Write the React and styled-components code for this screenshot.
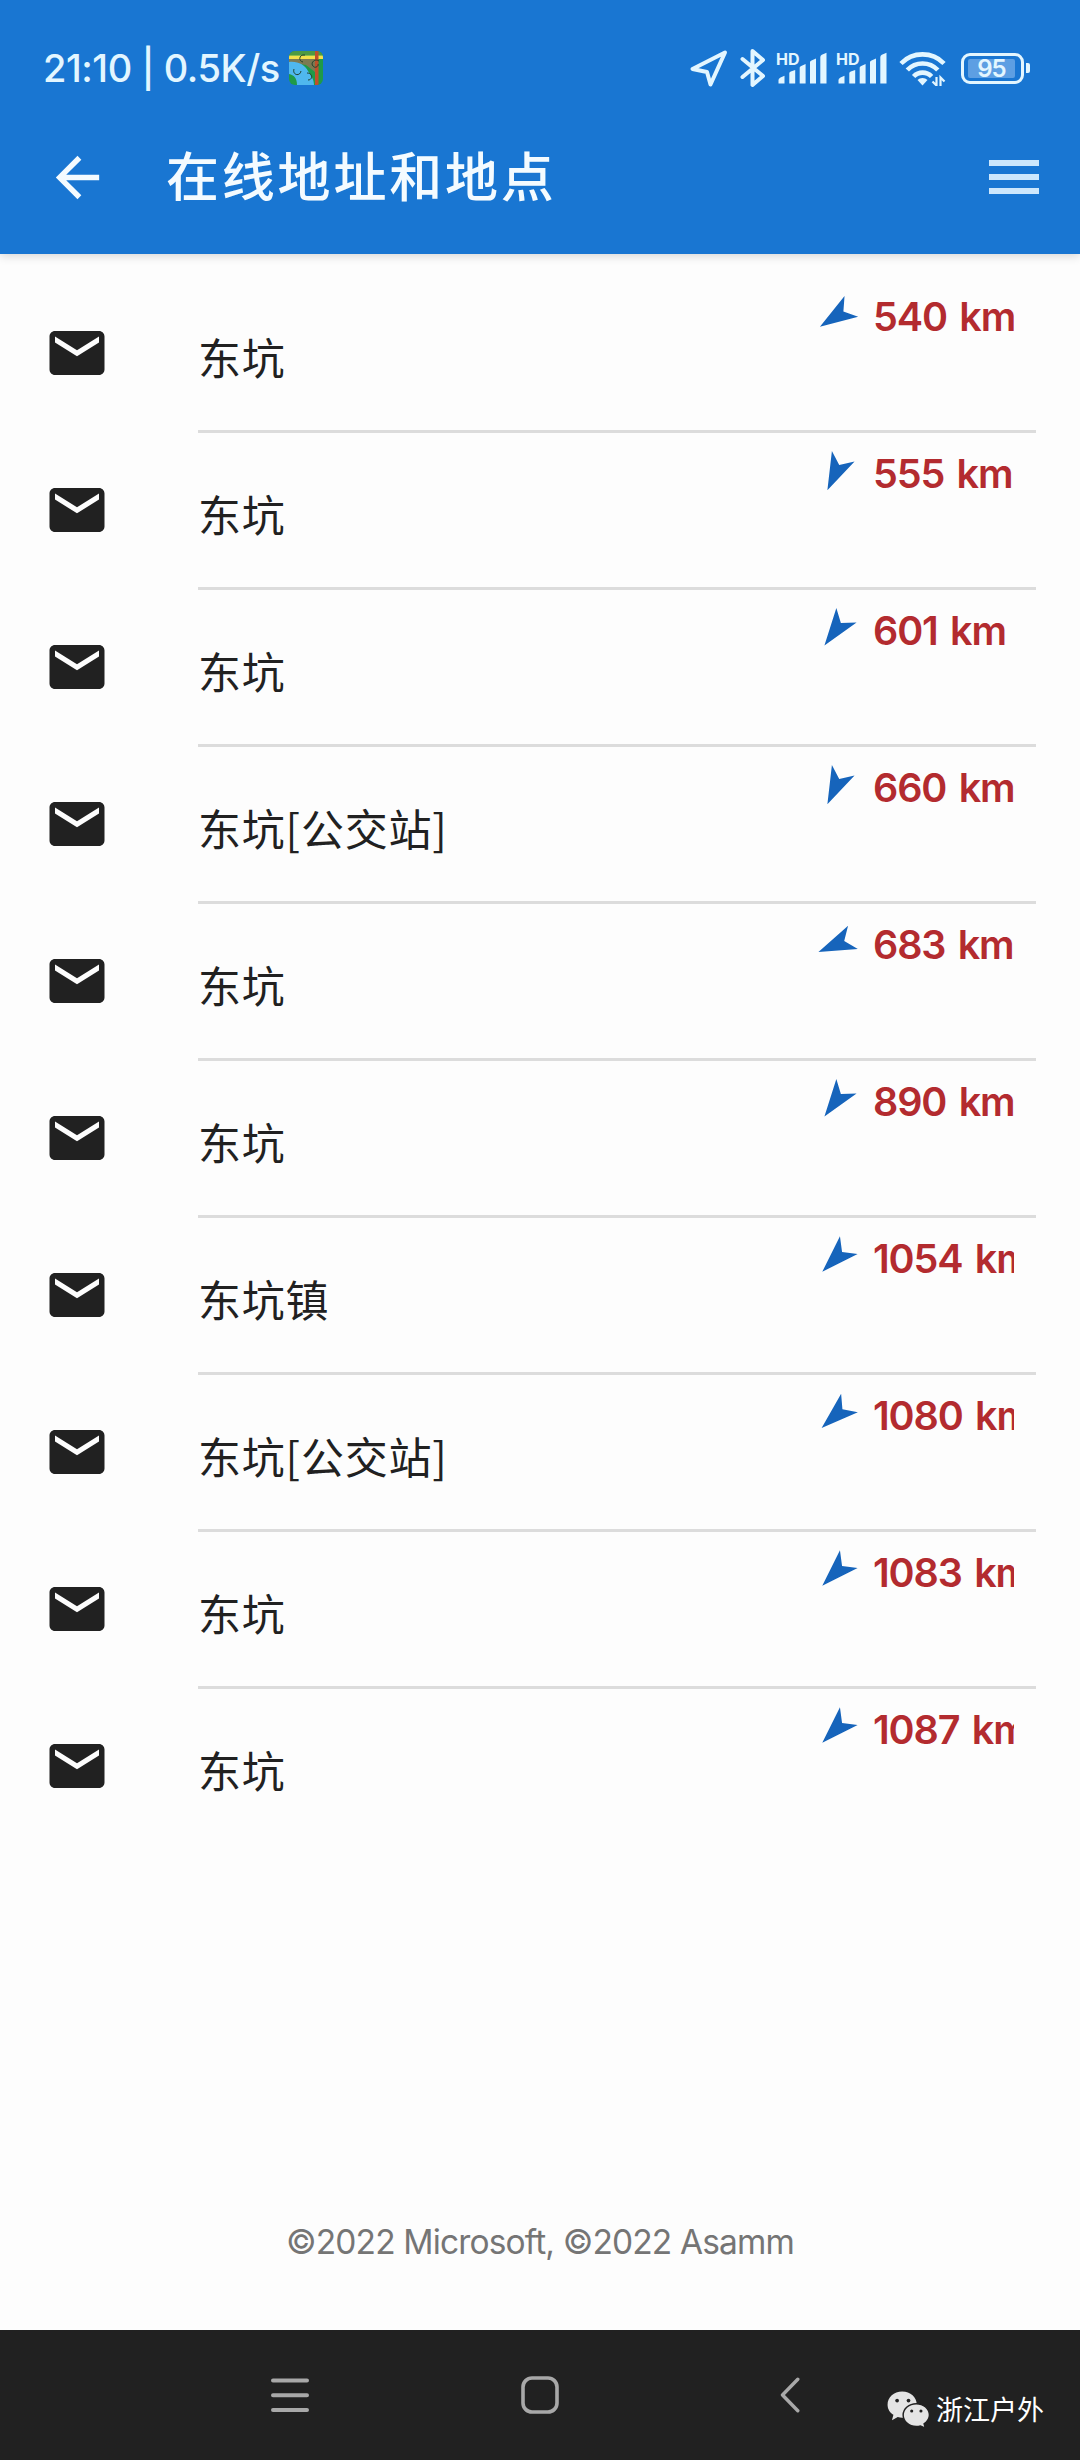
import styled, { createGlobalStyle } from "styled-components";

const GlobalStyle = createGlobalStyle`
  body {
    margin: 0;
    background-color: #fdfdfd;
    font-family: Inter, "Noto Sans CJK SC", sans-serif;
  }
`;

const Screen = styled.div`
  position: relative;
  display: flex;
  flex-direction: column;
  width: 1080px;
  height: 2460px;
  overflow: hidden;
`;

const Header = styled.header`
  height: 254px;
  background-color: #1976d2;
  box-shadow: 0 2px 9px rgba(0, 0, 0, 0.16);
`;

const StatusBar = styled.div`
  display: flex;
  align-items: center;
  height: 64px;
  padding: 36px 50px 0 43px;
  color: #e3f6ff;
`;

const Clock = styled.span`
  width: 246px;
  font-size: 38px;
  font-weight: 500;
  letter-spacing: -0.45px;
  white-space: nowrap;
`;

const StatusIcons = styled.div`
  display: flex;
  align-items: center;
  margin-left: auto;
`;

const StatusIcon = styled.svg`
  display: block;
  margin-left: ${(props) => props.$gap || 0}px;
`;

const Signal = styled.div`
  position: relative;
  width: 50px;
  height: 36px;
  margin-left: ${(props) => props.$gap}px;
`;

const Hd = styled.span`
  position: absolute;
  top: 2px;
  left: -1px;
  font-size: 16px;
  font-weight: 700;
  line-height: 14px;
`;

const Battery = styled.div`
  box-sizing: border-box;
  width: 63px;
  height: 31px;
  margin-left: 14px;
  padding: 3px 4px;
  border: 3px solid #e3f6ff;
  border-radius: 9px;
`;

const Level = styled.div`
  width: 47px;
  height: 19px;
  background-color: #5d9fe3;
  border-radius: 2px;
  font-size: 24px;
  font-weight: 600;
  line-height: 19px;
  letter-spacing: -1px;
  text-align: center;
`;

const BatteryTip = styled.div`
  width: 4px;
  height: 10px;
  margin-left: 2px;
  background-color: #e3f6ff;
  border-radius: 0 2px 2px 0;
`;

const Toolbar = styled.div`
  display: flex;
  align-items: center;
  height: 154px;
  padding: 0 41px 0 45px;
`;

const Title = styled.h1`
  flex: 1;
  margin: -6px 0 0 56px;
  color: #f4fbff;
  font-family: "Noto Sans CJK SC", sans-serif;
  font-size: 53px;
  font-weight: 500;
  letter-spacing: 2.8px;
  line-height: 80px;
`;

const MenuButton = styled.div`
  display: flex;
  flex-direction: column;
  gap: 8px;
  width: 50px;
`;

const MenuLine = styled.span`
  height: 6px;
  background-color: #cde7fc;
`;

const List = styled.main`
  flex: 1;
  padding-top: 22px;
`;

const Row = styled.div`
  display: flex;
  height: 157px;
`;

const MailIcon = styled.svg`
  width: 66px;
  height: 66px;
  margin: 44px 88px 0 44px;
`;

const RowBody = styled.div`
  box-sizing: border-box;
  display: flex;
  width: 838px;
  padding-right: 22px;
  border-bottom: 3px solid ${(props) => (props.$last ? "transparent" : "#dcdcdc")};
`;

const Name = styled.span`
  flex: 1;
  padding-top: 48px;
  color: #212121;
  font-family: "Noto Sans CJK SC", sans-serif;
  font-size: 43px;
  line-height: 64px;
  letter-spacing: 0.8px;
`;

const Distance = styled.div`
  display: flex;
  align-items: center;
  width: 199px;
  height: 40px;
  margin-top: 21px;
`;

const Arrow = styled.svg`
  flex: none;
  width: 40px;
  height: 40px;
  transform: rotate(${(props) => props.$bearing}deg);
`;

const Km = styled.span`
  width: 141px;
  margin-left: 18px;
  overflow: hidden;
  color: #b32b2f;
  font-size: 39.5px;
  font-weight: 600;
  line-height: 48px;
  letter-spacing: -1.1px;
  word-spacing: 3.5px;
  white-space: nowrap;
`;

const Copyright = styled.footer`
  height: 120px;
  color: #757575;
  font-size: 33.5px;
  line-height: 64px;
  letter-spacing: -0.85px;
  text-align: center;
`;

const NavBar = styled.nav`
  display: flex;
  box-sizing: border-box;
  height: 130px;
  padding: 0 165px;
  background-color: #212121;
`;

const NavItem = styled.div`
  display: flex;
  align-items: center;
  justify-content: center;
  width: 250px;
`;

const Watermark = styled.div`
  position: absolute;
  right: 36px;
  bottom: 31px;
  display: flex;
  align-items: center;
  gap: 6px;
  color: #fff;
  font-family: "Noto Sans CJK SC", sans-serif;
  font-size: 27px;
  line-height: 40px;
`;

const places = [
  { name: "东坑", km: "540 km", bearing: 237 },
  { name: "东坑", km: "555 km", bearing: 205 },
  { name: "东坑", km: "601 km", bearing: 216 },
  { name: "东坑[公交站]", km: "660 km", bearing: 205 },
  { name: "东坑", km: "683 km", bearing: 247 },
  { name: "东坑", km: "890 km", bearing: 216 },
  { name: "东坑镇", km: "1054 km", bearing: 225 },
  { name: "东坑[公交站]", km: "1080 km", bearing: 228 },
  { name: "东坑", km: "1083 km", bearing: 225 },
  { name: "东坑", km: "1087 km", bearing: 225 },
];

const MapBadge = () => (
  <StatusIcon width="34" height="34" viewBox="0 0 34 34">
    <clipPath id="badge">
      <rect width="34" height="34" rx="6" />
    </clipPath>
    <g clipPath="url(#badge)">
      <rect width="34" height="34" fill="#1f9a48" />
      <path d="M0 7h26v14l-9-7L0 11z" fill="#7c7a52" />
      <path d="M0 11c9-1 16 3 19 9 3 5 6 8 6 14H8C8 27 5 24 0 23z" fill="#4fb8ee" />
      <rect y="0" width="34" height="4" fill="#4d9a43" />
      <rect y="4.500" width="34" height="3.500" fill="#f3e04a" />
      <rect x="26" width="3.500" height="34" fill="#c0502a" />
      <g fill="none" stroke="#23402e" strokeWidth="1">
        <path d="M16 4c-6-1-7 6-2 7M5 18c-2 6 6 8 7 2M18 22c6 0 6 7 1 7M30 10c-4-3-9 2-6 5 2 3 6 0 5-2" />
      </g>
    </g>
  </StatusIcon>
);

const SignalBars = ({ gap }) => (
  <Signal $gap={gap}>
    <Hd>HD</Hd>
    <svg width="50" height="36" viewBox="0 0 50 36" fill="#e3f6ff">
      <path d="M1.500 33.500v-3.500q0-1.500 2-2.500l4-1.800v7.800z" />
      <path d="M12.300 33.500V23q0-1 1.500-1.500l4.400-1.500v13.500z" />
      <path d="M22.700 33.500V17.500q0-1 1.500-1.500l4.400-2v19.500z" />
      <path d="M33 33.500V12q0-1 1.500-1.500l4.500-2v25z" />
      <path d="M43.300 33.500V7q0-1.500 1.500-2.200l4.700-2v30.700z" />
    </svg>
  </Signal>
);

const WechatLogo = () => (
  <svg width="43" height="37" viewBox="0 0 44 38">
    <path
      d="M15.500 0.500C7 .500.500 6.500.500 14c0 4.500 2.500 8.200 6 10.500L5 30l6-3.200c1.500.400 3 .700 4.500.700C24 27.500 30.500 21.500 30.500 14S24 .500 15.500.500z"
      fill="#e4e4e4"
    />
    <path
      d="M30 13c-7.500 0-13.500 5.200-13.500 11.700S22.500 36.500 30 36.500c1.600 0 3-.200 4.300-.600l5 2.300-1.300-4.500c3.300-2.200 5.500-5.300 5.500-9C43.500 18.200 37.500 13 30 13z"
      fill="#e4e4e4"
      stroke="#212121"
      strokeWidth="1.500"
    />
    <g fill="#212121">
      <circle cx="10.300" cy="9.800" r="1.900" />
      <circle cx="22" cy="9.800" r="1.900" />
      <circle cx="25.300" cy="20.500" r="1.600" />
      <circle cx="34.800" cy="20.500" r="1.600" />
    </g>
  </svg>
);

const App = () => (
  <Screen>
    <GlobalStyle />
    <Header>
      <StatusBar>
        <Clock>21:10 | 0.5K/s</Clock>
        <MapBadge />
        <StatusIcons>
          <StatusIcon width="40" height="40" viewBox="0 0 40 40">
            <path
              d="M3.500 21 36 4.500 21.500 36.500 18 24z"
              fill="none"
              stroke="#e3f6ff"
              strokeWidth="4"
              strokeLinejoin="round"
            />
          </StatusIcon>
          <StatusIcon $gap={11} width="26" height="40" viewBox="0 0 26 40">
            <path
              d="M2.500 11 23 28 12.500 37V3L23 12 2.500 29"
              fill="none"
              stroke="#e3f6ff"
              strokeWidth="4"
              strokeLinejoin="round"
              strokeLinecap="round"
            />
          </StatusIcon>
          <SignalBars gap={11} />
          <SignalBars gap={10} />
          <StatusIcon $gap={12} width="48" height="36" viewBox="0 0 48 36">
            <g fill="none" stroke="#e3f6ff" strokeWidth="4.600">
              <path d="M2 13.500a30 30 0 0 1 43 0" />
              <path d="M8.300 20a21 21 0 0 1 30.500 0" />
              <path d="M14.600 26.500a12.500 12.500 0 0 1 18 0" />
            </g>
            <path d="M18.500 30a7 7 0 0 1 10 0l-5 5.500z" fill="#e3f6ff" />
            <path
              d="M37.500 27v8.500l-4-4M41.500 36v-8.500l4 4"
              fill="none"
              stroke="#e3f6ff"
              strokeWidth="2.200"
            />
          </StatusIcon>
          <Battery>
            <Level>95</Level>
          </Battery>
          <BatteryTip />
        </StatusIcons>
      </StatusBar>
      <Toolbar>
        <svg width="65" height="65" viewBox="0 0 24 24">
          <path
            d="M20 11H7.830l5.590-5.590L12 4l-8 8 8 8 1.410-1.410L7.830 13H20v-2z"
            fill="#f4fbff"
          />
        </svg>
        <Title>在线地址和地点</Title>
        <MenuButton>
          <MenuLine />
          <MenuLine />
          <MenuLine />
        </MenuButton>
      </Toolbar>
    </Header>
    <List>
      {places.map((place, i) => (
        <Row key={i}>
          <MailIcon viewBox="0 0 24 24">
            <path
              d="M20 4H4c-1.100 0-2 .900-2 2v12c0 1.100.900 2 2 2h16c1.100 0 2-.900 2-2V6c0-1.100-.900-2-2-2zm0 4.200-8 5-8-5V6l8 5 8-5z"
              fill="#212121"
            />
          </MailIcon>
          <RowBody $last={i === places.length - 1}>
            <Name>{place.name}</Name>
            <Distance>
              <Arrow $bearing={place.bearing} viewBox="0 0 40 40">
                <path d="M20 2 32.500 39.500 20 30 7.500 39.500z" fill="#1664bb" />
              </Arrow>
              <Km>{place.km}</Km>
            </Distance>
          </RowBody>
        </Row>
      ))}
    </List>
    <Copyright>©2022 Microsoft, ©2022 Asamm</Copyright>
    <NavBar>
      <NavItem>
        <svg width="38" height="34" viewBox="0 0 38 34">
          <path
            d="M2 2.500h34M2 17.300h34M2 32h34"
            stroke="#a8a8a8"
            strokeWidth="4"
            strokeLinecap="round"
          />
        </svg>
      </NavItem>
      <NavItem>
        <svg width="38" height="38" viewBox="0 0 38 38">
          <rect
            x="2"
            y="2"
            width="34"
            height="34"
            rx="9"
            fill="none"
            stroke="#a8a8a8"
            strokeWidth="3.600"
          />
        </svg>
      </NavItem>
      <NavItem>
        <svg width="20" height="36" viewBox="0 0 20 36">
          <path
            d="M17.800 2.200 2.500 18 17.800 33.800"
            fill="none"
            stroke="#a8a8a8"
            strokeWidth="3.400"
            strokeLinecap="round"
            strokeLinejoin="round"
          />
        </svg>
      </NavItem>
    </NavBar>
    <Watermark>
      <WechatLogo />
      浙江户外
    </Watermark>
  </Screen>
);

export default App;
